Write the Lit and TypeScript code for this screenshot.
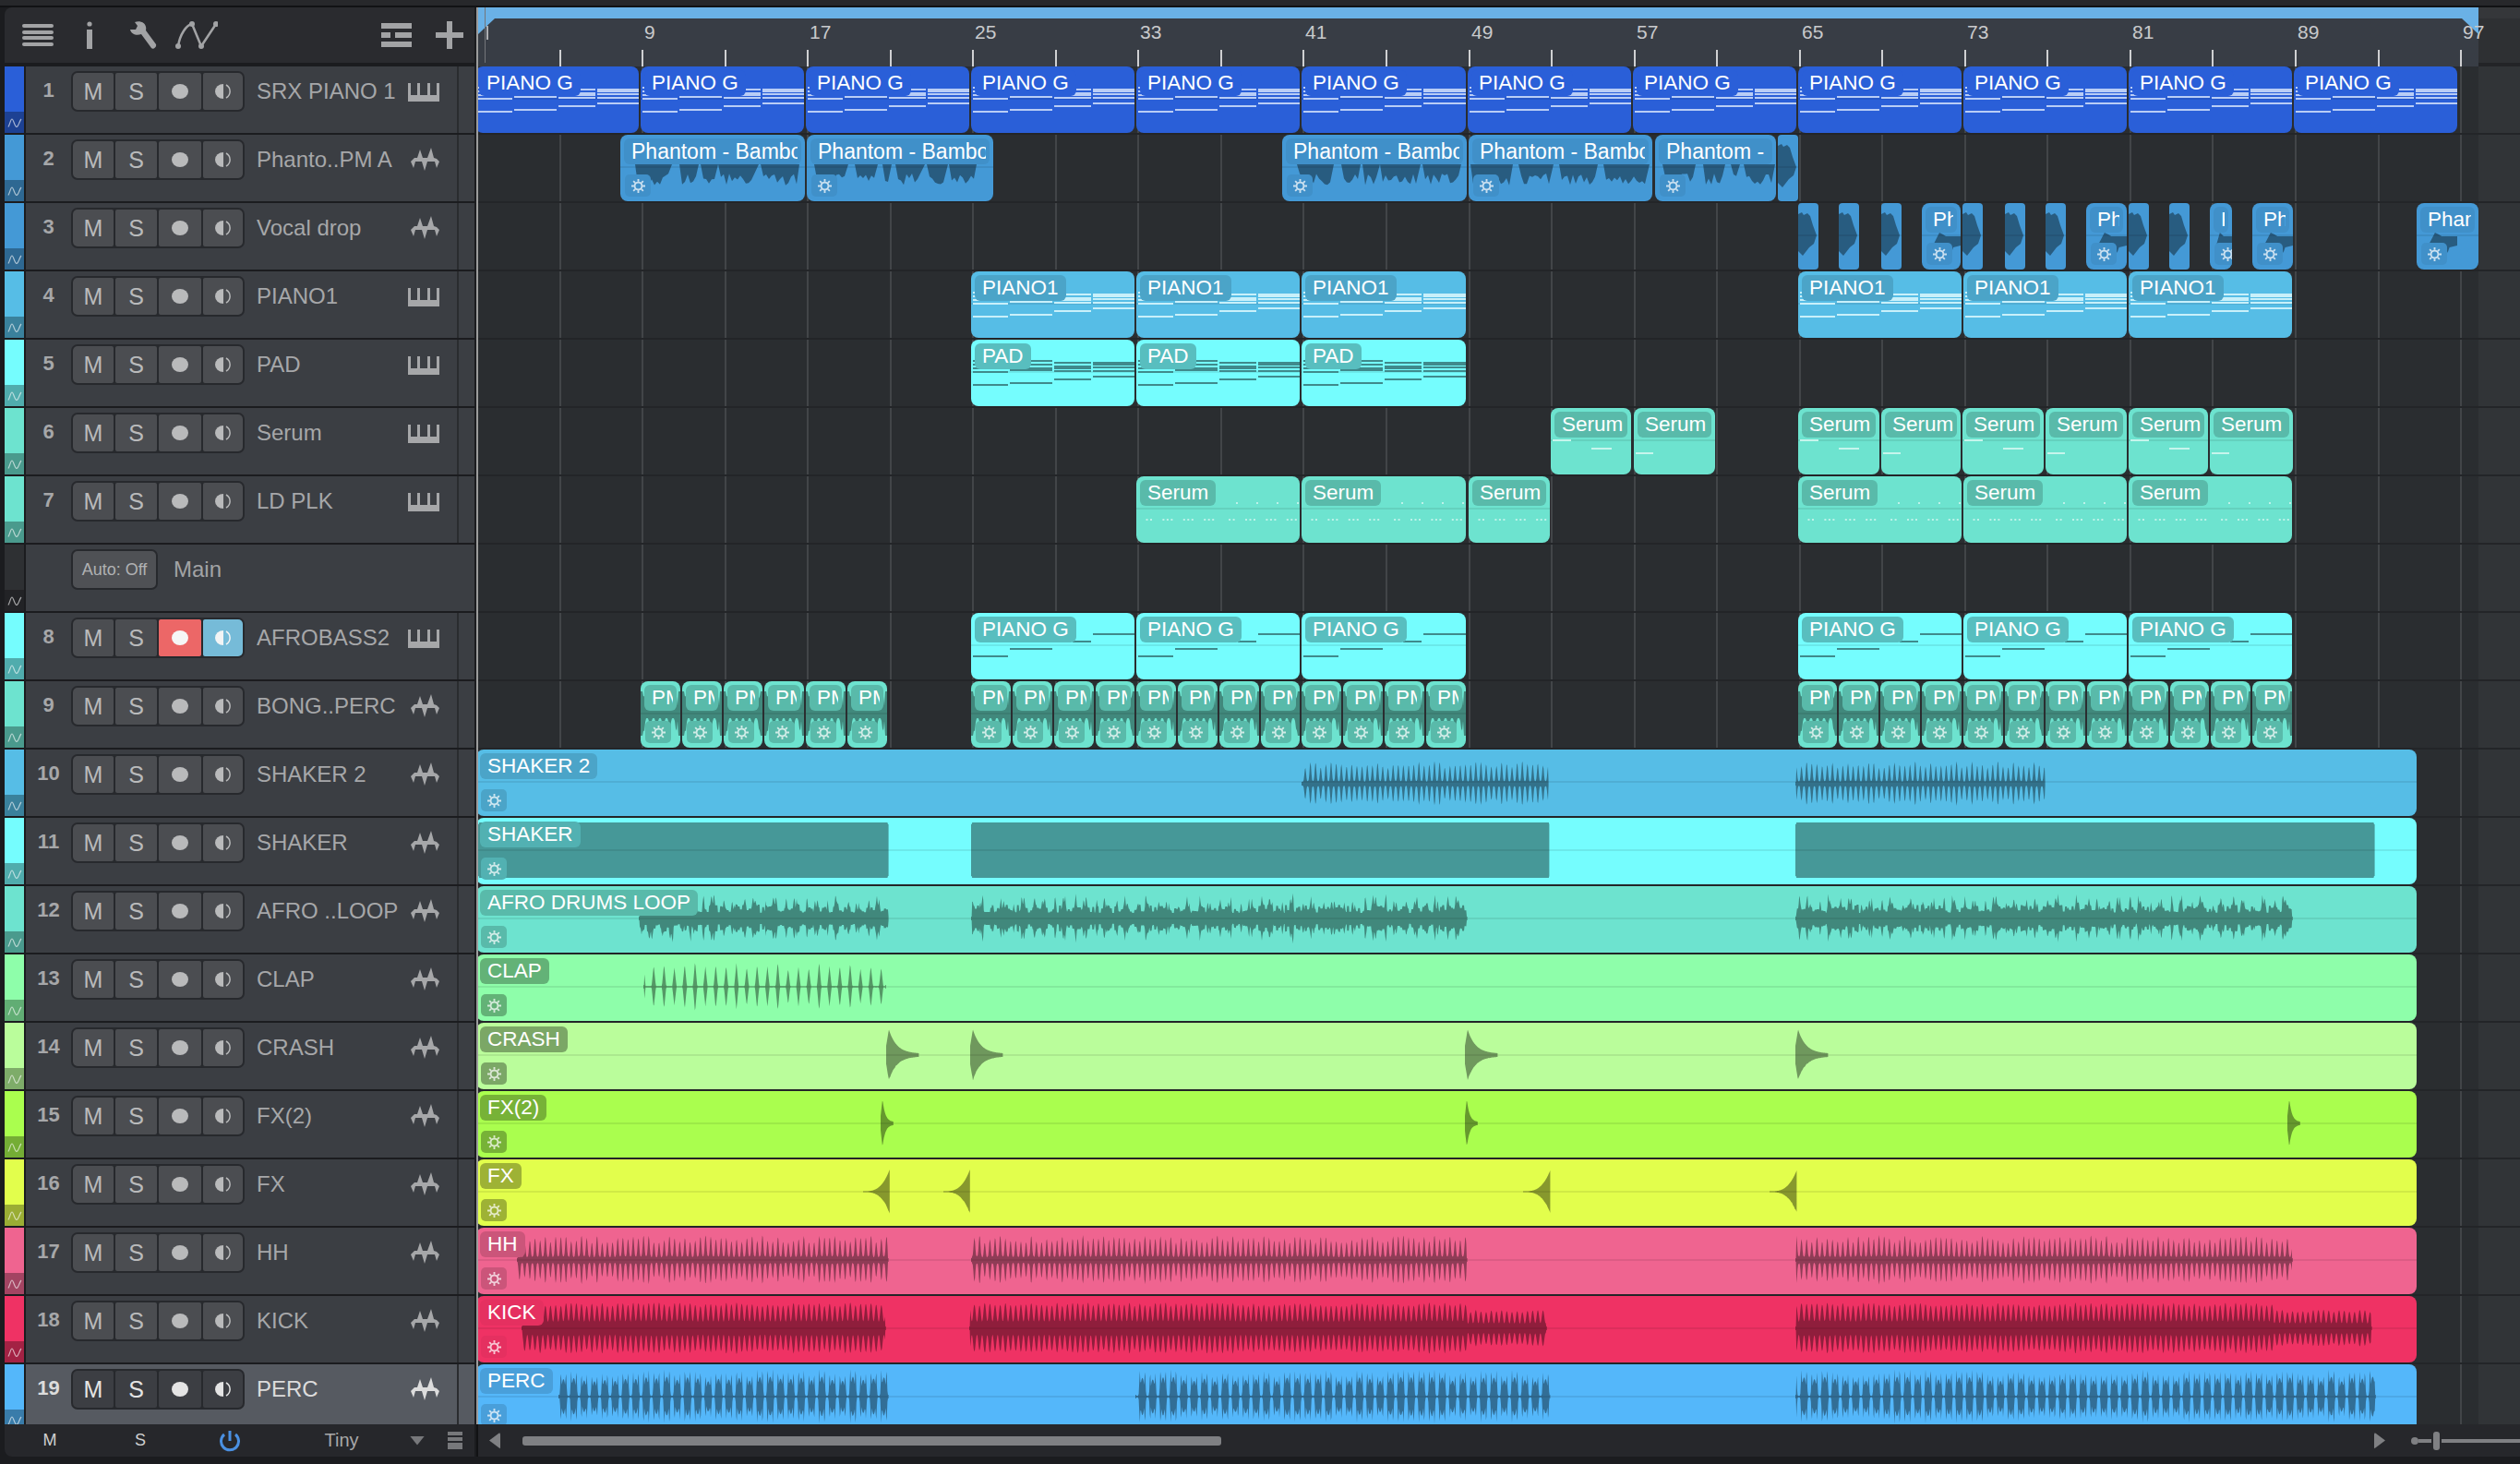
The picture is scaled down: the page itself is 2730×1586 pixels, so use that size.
import { LitElement, html, svg, css } from 'lit';
import { customElement } from 'lit/decorators.js';

type Clip = { x0: number; x1: number; label: string; kind: string; idx?: number };
type Row = {
  n?: number;
  name: string;
  color: string;
  icon?: string;
  chip: number;
  note?: string;
  clips: Clip[];
  wave?: string;
  spans?: number[][];
  auto?: boolean;
};

const bx = (b: number) => 516 + (b - 1) * 22.386;

function shade(hex: string, f: number) {
  const v = [1, 3, 5].map((i) => Math.round(parseInt(hex.slice(i, i + 2), 16) * f));
  return `rgb(${v[0]},${v[1]},${v[2]})`;
}

function rng(seed: number) {
  let s = seed;
  return () => {
    s = (s + 0x6d2b79f5) | 0;
    let t = Math.imul(s ^ (s >>> 15), 1 | s);
    t = (t + Math.imul(t ^ (t >>> 7), 61 | t)) ^ t;
    return ((t ^ (t >>> 14)) >>> 0) / 4294967296;
  };
}

function bars(starts: number[], len: number, label: string, kind: string): Clip[] {
  return starts.map((b, idx) => ({
    x0: Math.round(bx(b)) - 1,
    x1: Math.round(bx(b + len)) - 3,
    label,
    kind,
    idx,
  }));
}

function px(list: number[][], label: string, kind: string): Clip[] {
  return list.map((s, idx) => ({ x0: s[0], x1: s[1], label, kind, idx }));
}

function full(label: string): Clip[] {
  return [{ x0: 516, x1: 2618, label, kind: 'full' }];
}

const every8 = (from: number, count: number) => Array.from({ length: count }, (_, i) => from + i * 8);
const every2 = (from: number, count: number) => Array.from({ length: count }, (_, i) => from + i * 2);

const ROWS: Row[] = [
  { n: 1, name: 'SRX PIANO 1', color: '#2a5fd8', icon: 'keys', chip: 1, note: '#b9cdf6', clips: bars(every8(1, 12), 8, 'PIANO G', 'chords') },
  {
    n: 2, name: 'Phanto..PM A', color: '#4499d6', icon: 'wave', chip: 0.94,
    clips: [
      ...px([[672, 872], [874, 1076], [1389, 1589], [1591, 1790]], 'Phantom - Bamboo', 'phantom'),
      { x0: 1793, x1: 1924, label: 'Phantom - Bamboo', kind: 'phantom', idx: 4 },
      { x0: 1926, x1: 1948, label: '', kind: 'stub' },
    ],
  },
  {
    n: 3, name: 'Vocal drop', color: '#4499d6', icon: 'wave', chip: 0.94,
    clips: [
      ...px([[1948, 1970], [1992, 2014], [2038, 2060], [2126, 2148], [2172, 2194], [2216, 2238], [2306, 2328], [2350, 2372]], '', 'stub'),
      ...px([[2082, 2124], [2260, 2304], [2394, 2418], [2440, 2484], [2618, 2685]], 'Phantom', 'ph'),
    ],
  },
  { n: 4, name: 'PIANO1', color: '#56bde6', icon: 'keys', chip: 0.87, note: '#c8f0fa', clips: bars([25, 33, 41, 65, 73, 81], 8, 'PIANO1', 'chords') },
  { n: 5, name: 'PAD', color: '#75fdfe', icon: 'keys', chip: 0.75, note: '#3f8a8c', clips: bars([25, 33, 41], 8, 'PAD', 'chords') },
  {
    n: 6, name: 'Serum', color: '#6de3cf', icon: 'keys', chip: 0.82, note: '#c6f5ec',
    clips: px([[1680, 1767], [1770, 1858], [1948, 2036], [2038, 2124], [2126, 2214], [2216, 2304], [2306, 2392], [2394, 2484]], 'Serum', 'serum'),
  },
  {
    n: 7, name: 'LD PLK', color: '#6de3cf', icon: 'keys', chip: 0.82, note: 'rgba(255,255,255,0.55)',
    clips: [
      ...bars([33, 41], 8, 'Serum', 'dots'),
      { x0: 1591, x1: 1679, label: 'Serum', kind: 'dots' },
      ...bars([65, 73, 81], 8, 'Serum', 'dots'),
    ],
  },
  { name: 'Main', color: '#2e3033', chip: 1, clips: [], auto: true },
  { n: 8, name: 'AFROBASS2', color: '#75fdfe', icon: 'keys', chip: 0.75, note: '#3f8a8c', clips: bars([25, 33, 41, 65, 73, 81], 8, 'PIANO G', 'sparse') },
  {
    n: 9, name: 'BONG..PERC', color: '#6de3cf', icon: 'wave', chip: 0.82,
    clips: [...every2(9, 6), ...every2(25, 12), ...every2(65, 12)].flatMap((b) => bars([b], 2, 'PM', 'pn')),
  },
  { n: 10, name: 'SHAKER 2', color: '#56bde6', icon: 'wave', chip: 0.87, clips: full('SHAKER 2'), wave: 'shaker', spans: [[1410, 1678], [1945, 2216]] },
  { n: 11, name: 'SHAKER', color: '#75fdfe', icon: 'wave', chip: 0.7, clips: full('SHAKER'), wave: 'block', spans: [[518, 963], [1052, 1679], [1945, 2573]] },
  { n: 12, name: 'AFRO ..LOOP', color: '#6de3cf', icon: 'wave', chip: 0.82, clips: full('AFRO DRUMS LOOP'), wave: 'afro', spans: [[692, 963], [1052, 1590], [1945, 2484]] },
  { n: 13, name: 'CLAP', color: '#8efeaa', icon: 'wave', chip: 0.7, clips: full('CLAP'), wave: 'clap', spans: [[697, 960]] },
  { n: 14, name: 'CRASH', color: '#bafd9b', icon: 'wave', chip: 0.66, clips: full('CRASH'), wave: 'crash', spans: [[960, 996], [1051, 1087], [1587, 1623], [1945, 1981]] },
  { n: 15, name: 'FX(2)', color: '#aafe4e', icon: 'wave', chip: 0.7, clips: full('FX(2)'), wave: 'hit', spans: [[954, 968], [1587, 1601], [2478, 2492]] },
  { n: 16, name: 'FX', color: '#e2fe4c', icon: 'wave', chip: 0.7, clips: full('FX'), wave: 'swell', spans: [[935, 964], [1022, 1051], [1650, 1680], [1917, 1947]] },
  { n: 17, name: 'HH', color: '#ef6490', icon: 'wave', chip: 0.85, clips: full('HH'), wave: 'hh', spans: [[560, 963], [1052, 1590], [1945, 2484]] },
  { n: 18, name: 'KICK', color: '#ef3264', icon: 'wave', chip: 0.96, clips: full('KICK'), wave: 'kick', spans: [[565, 960], [1050, 1676], [1945, 2570]] },
  { n: 19, name: 'PERC', color: '#54b7fa', icon: 'wave', chip: 0.87, clips: full('PERC'), wave: 'perc', spans: [[605, 963], [1230, 1680], [1945, 2574]] },
];

const PHANTOM_TEETH = [
  [[16, 56], [64, 85], [87, 106], [106, 150], [152, 194]],
  [[8, 45], [52, 77], [82, 92], [96, 128], [130, 153], [154, 184]],
  [[16, 56], [64, 85], [87, 106], [106, 150], [152, 194]],
  [[2, 48], [54, 92], [98, 140], [146, 196]],
  [[8, 44], [52, 76], [82, 92], [96, 130]],
];

// height of the wave at absolute x, for the looping kinds
function heightAt(kind: string, x: number, r: (i: number) => number): number {
  if (kind === 'block') return 30;
  if (kind === 'kick') {
    const s = Math.abs(Math.sin((Math.PI * x) / 5.6));
    const env = (x > 2463 && x < 2600) || (x > 1590 && x < 1680) ? 0.72 : 1;
    return 28 * env * (0.28 + 0.72 * s * s) * (0.86 + 0.14 * r(Math.floor(x / 5.6)));
  }
  if (kind === 'hh') {
    const s = Math.abs(Math.sin((Math.PI * x) / 5.6));
    return 27 * (0.16 + 0.84 * Math.pow(s, 4)) * (0.7 + 0.3 * r(Math.floor(x / 5.6)));
  }
  if (kind === 'shaker') {
    const s = Math.abs(Math.sin((Math.PI * x) / 5.6));
    const slow = Math.abs(Math.sin((Math.PI * x) / 22.4));
    return (3 + 22 * Math.pow(s, 4) * (0.75 + 0.25 * r(Math.floor(x / 5.6)))) * (0.78 + 0.22 * slow);
  }
  if (kind === 'perc') {
    const s = Math.abs(Math.sin((Math.PI * x) / 11.2));
    const t = Math.abs(Math.sin((Math.PI * x) / 5.6));
    const peak = 22 + 7 * r(Math.floor(x / 11.2));
    return Math.max(peak * 0.72 * Math.pow(s, 3), peak * Math.pow(t, 10)) + 0.8;
  }
  if (kind === 'afro') {
    const d = Math.abs(((x + 5) % 11.2) - 5.6);
    const spike = Math.max(0, 1 - d / 1.4);
    const d2 = Math.abs(((x + 2) % 22.4) - 11.2);
    const tall = Math.max(0, 1 - d2 / 1.6);
    return 6 + 9 * r(Math.floor(x / 2.4)) + spike * (6 + 8 * r(Math.floor(x / 11.2) + 500)) + tall * 12;
  }
  if (kind === 'clap') {
    const d = Math.abs(((x + 3) % 11.2) - 5.6);
    return Math.max(0.03, 1 - d / 2.4) * 28 * (0.68 + 0.32 * r(Math.floor(x / 11.2)));
  }
  return 2;
}

function wavePath(kind: string, x0: number, x1: number, origin: number, seed: number): string {
  const rand = rng(seed);
  const table = Array.from({ length: 1024 }, () => rand());
  const r = (i: number) => table[Math.abs(i) % 1024];
  const mid = kind === 'shaker' ? 37 : 35;
  const top: string[] = [];
  const bottom: string[] = [];
  const w = x1 - x0;
  for (let a = 0; a <= w; a += 0.6) {
    const x = x0 + a;
    let h = 0;
    if (kind === 'crash') h = a < 3 ? 10 + (a / 3) * 18 : 1.5 + 26 * Math.exp(-(a - 3) / 8.5);
    else if (kind === 'hit') h = a < 2 ? 8 + 9 * a : 1.5 + 25 * Math.exp(-(a - 2) / 3);
    else if (kind === 'swell') h = 0.5 + 24 * Math.pow(a / w, 3.2);
    else h = heightAt(kind, x, r);
    if (kind === 'block' && (a < 1 || w - a < 1)) h = 28;
    if (kind !== 'block' && kind !== 'crash' && kind !== 'hit' && kind !== 'swell' && (a < 1 || w - a < 1)) h = 2;
    const asym = kind === 'block' ? 1 : 0.94 + 0.06 * r(Math.floor(a) + 77);
    top.push(`${(x - origin).toFixed(1)} ${(mid - h).toFixed(1)}`);
    bottom.unshift(`${(x - origin).toFixed(1)} ${(mid + h * asym).toFixed(1)}`);
  }
  return `M${top.join('L')}L${bottom.join('L')}Z`;
}

function pnPath(w: number, seed: number): string {
  const rand = rng(seed);
  const top: string[] = [];
  const bottom: string[] = [];
  for (let a = 0; a <= w; a += 1) {
    const s = Math.abs(Math.sin((Math.PI * a) / 7));
    let h = 5 + 16 * Math.pow(s, 5) * (0.6 + 0.4 * rand());
    if (a < 3 || w - a < 3) h = 24;
    top.push(`${a} ${(35 - h).toFixed(1)}`);
    bottom.unshift(`${a} ${(35 + h).toFixed(1)}`);
  }
  return `M${top.join('L')}L${bottom.join('L')}Z`;
}

function teethPath(segs: number[][], seed: number): string {
  const rand = rng(seed);
  return segs
    .map(([a, b]) => {
      const pts = [`M${a} 32`];
      for (let x = a + 3; x < b - 2; x += 3) pts.push(`L${x} ${(42 + rand() * 13).toFixed(1)}`);
      pts.push(`L${b} 32Z`);
      return pts.join('');
    })
    .join('');
}

const CHORDS = [
  [2, 38, 22, 2], [2, 38, 26, 2], [2, 38, 30, 2], [2, 38, 34, 2], [2, 38, 48, 2],
  [42, 46, 22, 2], [42, 46, 26, 2], [42, 46, 30, 4], [42, 46, 46, 2],
  [90, 40, 24, 2], [90, 40, 28, 4], [90, 40, 33, 2], [90, 40, 42, 2],
  [132, 46, 24, 4], [132, 46, 29, 2], [132, 46, 33, 2], [132, 46, 39, 2],
];
const SPARSE = [[2, 38, 46, 2], [42, 46, 38, 2], [110, 20, 30, 2], [132, 46, 22, 2]];

const gearIcon = html`<svg class="gear-ico" viewBox="0 0 16 16" width="15" height="15">
  <circle cx="8" cy="8" r="4.2" fill="none" stroke="currentColor" stroke-width="2"></circle>
  <path d="M8 0v3M8 13v3M0 8h3M13 8h3M2.3 2.3l2.1 2.1M11.6 11.6l2.1 2.1M2.3 13.7l2.1-2.1M11.6 4.4l2.1-2.1" stroke="currentColor" stroke-width="2"></path>
</svg>`;

const autoIcon = html`<svg class="auto-ico" viewBox="0 0 16 10" width="16" height="10">
  <path d="M1 9.5C3 6 3.5 1 5 1c1.500 0 3 8.500 5 8.500S13 3 15 1" fill="none" stroke="currentColor" stroke-width="1.200"></path>
</svg>`;

const keysIcon = html`<svg class="t-ico" viewBox="0 0 34 20" width="34" height="20">
  <path d="M0 0h3v13h7V0h3v13h8V0h3v13h7V0h3v20H0z" fill="currentColor"></path>
</svg>`;

const waveIcon = html`<svg class="t-ico wave-ico" viewBox="0 0 31 25" width="31" height="25">
  <path d="M0 15L4 11L7 11L10 2L13 11L18 11L22 0L25 11L28 12L31 15L28 22L26 15L18 15L15 25L12 15L5 15L3 22Z" fill="currentColor"></path>
</svg>`;

const monIcon = html`<svg viewBox="0 0 18 16" width="18" height="16">
  <path d="M9 0A9 8 0 0 0 9 16Z" fill="currentColor"></path>
  <path d="M12 1A8 8 0 0 1 12 15" fill="none" stroke="currentColor" stroke-width="1.500"></path>
</svg>`;

@customElement('app-root')
export class AppRoot extends LitElement {
  static styles = css`
    :host {
      display: block;
      width: 2730px;
      height: 1586px;
      overflow: hidden;
      background: #1b1c1f;
      font-family: 'Liberation Sans', Arial, sans-serif;
    }
    .topline {
      height: 6px;
      background: #27282b;
      border-bottom: 2px solid #111214;
    }
    .main {
      display: flex;
      height: 1570px;
    }
    .left {
      width: 509px;
      margin-left: 5px;
      display: flex;
      flex-direction: column;
    }
    .toolbar {
      height: 60px;
      margin-bottom: 4px;
      background: #2a2b2f;
      border-top-left-radius: 8px;
      display: flex;
      align-items: center;
      padding: 0 12px 0 19px;
      color: #a2a3a5;
    }
    .toolbar svg {
      display: block;
      flex: none;
    }
    .tb-i { margin-left: 36px; }
    .tb-w { margin-left: 38px; }
    .tb-a { margin-left: 20px; }
    .tb-l { margin-left: auto; }
    .tb-p { margin-left: 26px; }

    .rows {
      height: 1471px;
      overflow: hidden;
    }
    .row {
      display: flex;
      height: 72px;
      margin-bottom: 2px;
    }
    .strip {
      width: 21px;
      flex: none;
      display: flex;
      flex-direction: column;
    }
    .strip-top {
      height: 49px;
    }
    .strip-bot {
      height: 23px;
      display: flex;
      align-items: center;
      justify-content: center;
      color: rgba(255, 255, 255, 0.6);
    }
    .body {
      flex: 1;
      margin-left: 2px;
      background: #3b3e43;
      display: flex;
      align-items: flex-start;
      padding-top: 5px;
      color: #a6a7a9;
    }
    .row.sel .body {
      background: #565a61;
      color: #dcdcdc;
    }
    .num {
      width: 49px;
      flex: none;
      text-align: center;
      font-size: 22px;
      font-weight: bold;
      line-height: 42px;
    }
    .btns {
      width: 188px;
      height: 44px;
      flex: none;
      box-sizing: border-box;
      display: flex;
      gap: 2px;
      padding: 2px;
      background: #27292d;
      border-radius: 7px;
    }
    .btn {
      flex: 1;
      display: flex;
      align-items: center;
      justify-content: center;
      background: #4b4d51;
      color: #b9babb;
      font-size: 25px;
      border-radius: 2px;
    }
    .row.sel .btn {
      background: #3c3e43;
      color: #e4e4e4;
    }
    .btn.m { flex: none; width: 44px; border-radius: 5px 2px 2px 5px; }
    .btn.s { flex: none; width: 45px; }
    .btn.r { flex: none; width: 46px; }
    .btn.v { flex: none; width: 43px; border-radius: 2px 5px 5px 2px; }
    .btn.rec-on {
      background: #ec6767;
      color: #f6f6f6;
    }
    .btn.mon-on {
      background: #76bbd8;
      color: #f2f4f5;
    }
    .dot {
      width: 18px;
      height: 16px;
      border-radius: 50%;
      background: currentColor;
    }
    .name {
      width: 164px;
      flex: none;
      margin-left: 13px;
      font-size: 24px;
      line-height: 44px;
      white-space: nowrap;
      overflow: hidden;
    }
    .t-ico {
      flex: none;
      margin-top: 13px;
      width: 34px;
      display: block;
    }
    .wave-ico {
      margin-top: 9px;
      margin-left: 3px;
      width: 31px;
    }
    .vline {
      flex: none;
      width: 2px;
      margin-left: 19px;
      margin-top: -5px;
      height: 72px;
      background: #2a2c2f;
    }
    .auto-btn {
      margin-left: 49px;
      width: 94px;
      height: 44px;
      box-sizing: border-box;
      border: 2px solid #27292d;
      border-radius: 7px;
      background: #4f5155;
      color: #b0b1b3;
      font-size: 18px;
      display: flex;
      align-items: center;
      justify-content: center;
    }
    .main-name {
      margin-left: 17px;
      font-size: 24px;
      line-height: 44px;
      color: #a2a3a5;
    }

    .bar-l {
      height: 35px;
      background: #26272b;
      border-bottom-left-radius: 8px;
      display: flex;
      align-items: center;
      color: #cfcfd0;
      font-size: 18px;
    }
    .cell {
      display: flex;
      align-items: center;
      justify-content: center;
      flex: none;
    }
    .c-m { width: 98px; }
    .c-p { width: 96px; }
    .c-t { width: 146px; font-size: 20px; color: #a8a8a9; }
    .tri-d {
      width: 16px;
      height: 10px;
      margin-left: 1px;
      background: #77787b;
      clip-path: polygon(0 0, 100% 0, 50% 100%);
    }
    .lines {
      margin-left: 25px;
      width: 16px;
      display: flex;
      flex-direction: column;
      gap: 2px;
    }
    .lines i {
      display: block;
      height: 4px;
      background: #77787b;
    }
    .lines i:last-child {
      height: 7px;
    }

    .right {
      margin-left: 2px;
      width: 2214px;
      display: flex;
      flex-direction: column;
    }
    .ruler {
      height: 64px;
      border-left: 2px solid #9c9c9c;
      background: linear-gradient(#35373a 0 12px, #2e3033 12px 60px, #232427 60px);
      position: relative;
    }
    .loop {
      width: 2167px;
      height: 12px;
      background: #6ab1e6;
    }
    .scale {
      width: 2167px;
      height: 52px;
      background: #383d45;
      position: relative;
    }
    .tick {
      position: absolute;
      top: 34px;
      width: 2px;
      height: 18px;
      background: #cfd0d2;
    }
    .bar-no {
      position: absolute;
      top: 3px;
      font-size: 21px;
      line-height: 24px;
      color: #c9cacc;
    }
    .tri-a,
    .tri-b {
      position: absolute;
      top: 0;
      width: 18px;
      height: 17px;
      background: #6ab1e6;
    }
    .tri-a {
      left: 0;
      clip-path: polygon(0 0, 100% 0, 0 100%);
    }
    .tri-b {
      left: 2149px;
      clip-path: polygon(0 0, 100% 0, 100% 100%);
    }
    .start-mark {
      position: absolute;
      left: 7px;
      top: -12px;
      width: 1px;
      height: 60px;
      background: #74767a;
    }
    .start-mark-b {
      position: absolute;
      left: 9px;
      top: 8px;
      width: 2px;
      height: 15px;
      background: #aeb0b3;
    }
    .lanes {
      height: 1471px;
      position: relative;
      overflow: hidden;
      border-left: 2px solid #9c9c9c;
      background: #2a2d30;
    }
    .past {
      position: absolute;
      left: 2167px;
      right: 0;
      top: 0;
      bottom: 0;
      background: rgba(255, 255, 255, 0.035);
    }
    .grid-line {
      position: absolute;
      top: 0;
      bottom: 0;
      width: 2px;
      background: #424548;
    }
    .lane {
      height: 72px;
      border-bottom: 2px solid #232528;
      position: relative;
    }
    .clip {
      position: absolute;
      top: 0;
      height: 72px;
      border-radius: 8px;
      overflow: hidden;
    }
    .clip.stub {
      border-radius: 4px;
    }
    .mid {
      position: absolute;
      left: 0;
      right: 0;
      top: 34px;
      height: 2px;
      background: rgba(0, 0, 0, 0.08);
    }
    .paint {
      position: absolute;
      left: 0;
      top: 0;
      display: block;
    }
    .chip {
      position: absolute;
      left: 4px;
      top: 4px;
      height: 28px;
      max-width: calc(100% - 8px);
      box-sizing: border-box;
      padding: 0 4px 0 8px;
      border-radius: 6px;
      display: flex;
      align-items: center;
      color: #fff;
      font-size: 22.5px;
    }
    .chip.phantom {
      font-size: 23px;
    }
    .chip span {
      display: block;
      min-width: 0;
      padding-right: 4px;
      overflow: hidden;
      white-space: nowrap;
      line-height: 28px;
    }
    .gear {
      position: absolute;
      left: 5px;
      top: 43px;
      width: 28px;
      height: 24px;
      border-radius: 5px;
      display: flex;
      align-items: center;
      justify-content: center;
      color: rgba(255, 255, 255, 0.72);
    }
    .gear-ico {
      display: block;
      flex: none;
    }
    .bar-r {
      height: 35px;
      background: #26272b;
      border-left: 2px solid #111214;
      display: flex;
      align-items: center;
      padding-left: 12px;
    }
    .arrow {
      width: 12px;
      height: 18px;
      flex: none;
      background: #7f8083;
      border-radius: 2px;
    }
    .arrow.l {
      clip-path: polygon(100% 0, 100% 100%, 0 50%);
    }
    .arrow.r {
      margin-left: auto;
      clip-path: polygon(0 0, 0 100%, 100% 50%);
    }
    .thumb {
      width: 757px;
      height: 10px;
      margin-left: 24px;
      flex: none;
      border-radius: 3px;
      background: #7f8083;
    }
    .zoom {
      flex: none;
      width: 118px;
      margin-left: 28px;
      display: flex;
      align-items: center;
    }
    .zoom-dot {
      width: 8px;
      height: 8px;
      border-radius: 50%;
      background: #7f8083;
    }
    .zoom-a {
      width: 14px;
      height: 4px;
      background: #7f8083;
    }
    .zoom-t {
      width: 7px;
      height: 20px;
      margin: 0 2px;
      border-radius: 3px;
      background: #7f8083;
    }
    .zoom-b {
      flex: 1;
      height: 4px;
      background: #7f8083;
    }
  `;

  private toolbar() {
    return html`<div class="toolbar">
      <svg width="34" height="24" viewBox="0 0 34 24" fill="currentColor">
        <rect y="0" width="34" height="4" rx="2"></rect>
        <rect y="7" width="34" height="4" rx="2"></rect>
        <rect y="13" width="34" height="4" rx="2"></rect>
        <rect y="20" width="34" height="4" rx="2"></rect>
      </svg>
      <svg class="tb-i" width="6" height="30" viewBox="0 0 6 30" fill="currentColor">
        <circle cx="3" cy="3" r="2.600"></circle>
        <rect y="9" width="6" height="21"></rect>
      </svg>
      <svg class="tb-w" width="32" height="30" viewBox="0 0 32 30" fill="currentColor">
        <path d="M3 9L9 9L11 5L8 1C13 -1 19 1 20 6C20.500 8 20 9 20 10L31 25C32 28 28 31 26 29L15 14C10 16 4 14 3 9Z"></path>
      </svg>
      <svg class="tb-a" width="46" height="30" viewBox="0 0 46 30" fill="none" stroke="currentColor" stroke-width="2.500">
        <path d="M3 27C5 14 12 4 18 3L28 27L44 3"></path>
        <g fill="currentColor" stroke="none">
          <circle cx="3" cy="27" r="3"></circle>
          <circle cx="18" cy="3" r="3"></circle>
          <circle cx="28" cy="27" r="3"></circle>
          <circle cx="44" cy="3" r="3"></circle>
        </g>
      </svg>
      <svg class="tb-l" width="33" height="26" viewBox="0 0 33 26" fill="currentColor">
        <rect width="33" height="6"></rect>
        <rect y="10" width="10" height="6"></rect>
        <rect x="15" y="10" width="18" height="6"></rect>
        <rect y="20" width="33" height="6"></rect>
      </svg>
      <svg class="tb-p" width="30" height="30" viewBox="0 0 30 30" fill="currentColor">
        <rect x="12" width="6" height="30"></rect>
        <rect y="12" width="30" height="6"></rect>
      </svg>
    </div>`;
  }

  private trackRow(r: Row) {
    const stripTop = html`<div class="strip-top" style="background:${r.color}"></div>`;
    if (r.auto) {
      return html`<div class="row">
        <div class="strip">
          ${stripTop}
          <div class="strip-bot" style="background:#222326">${autoIcon}</div>
        </div>
        <div class="body">
          <div class="auto-btn">Auto: Off</div>
          <div class="main-name">${r.name}</div>
        </div>
      </div>`;
    }
    const armed = r.n === 8;
    return html`<div class="row ${r.n === 19 ? 'sel' : ''}">
      <div class="strip">
        ${stripTop}
        <div class="strip-bot" style="background:${shade(r.color, 0.68)}">${autoIcon}</div>
      </div>
      <div class="body">
        <div class="num">${r.n}</div>
        <div class="btns">
          <div class="btn m">M</div>
          <div class="btn s">S</div>
          <div class="btn r ${armed ? 'rec-on' : ''}"><div class="dot"></div></div>
          <div class="btn v ${armed ? 'mon-on' : ''}">${monIcon}</div>
        </div>
        <div class="name">${r.name}</div>
        ${r.icon === 'keys' ? keysIcon : waveIcon}
        <div class="vline"></div>
      </div>
    </div>`;
  }

  private paint(r: Row, c: Clip, w: number) {
    const dark = 'rgba(0,0,0,0.4)';
    const note = r.note ?? '#fff';
    const seed = (r.n ?? 0) * 97 + (c.idx ?? 0) * 13 + 5;
    let body: unknown = null;
    if (c.kind === 'chords' || c.kind === 'sparse') {
      const list = c.kind === 'chords' ? CHORDS : SPARSE;
      body = list.map((n) => svg`<rect x=${n[0]} y=${n[2]} width=${n[1]} height=${n[3]} fill=${note}></rect>`);
    } else if (c.kind === 'serum') {
      const first = (c.idx ?? 0) % 2 === 0;
      body = first
        ? svg`<rect x="2" y="34" width="20" height="2" fill=${note}></rect><rect x="44" y="43" width="22" height="2" fill=${note}></rect>`
        : svg`<rect x="2" y="48" width="19" height="2" fill=${note}></rect>`;
    } else if (c.kind === 'dots') {
      const dots: unknown[] = [];
      for (let g = 0; g < 8; g++) {
        const x0 = 6 + g * 22.4;
        if (x0 > w - 8) break;
        for (let k = 0; k < 3; k++) {
          if (k === 0 && g % 4 === 0) continue;
          dots.push(svg`<rect x=${x0 + k * 4.5} y="46" width="2" height="2" fill=${note}></rect>`);
        }
      }
      for (let x = 108; x < w - 2; x += 22) {
        dots.push(svg`<rect x=${x} y="28" width="2" height="2" fill=${note}></rect>`);
      }
      body = dots;
    } else if (c.kind === 'phantom') {
      body = svg`<path d=${teethPath(PHANTOM_TEETH[c.idx ?? 0], seed)} fill=${dark}></path>`;
    } else if (c.kind === 'stub') {
      const k = w / 22;
      const pts = [[0, 12], [4, 10], [6, 13], [10, 11], [13, 14], [16, 24], [20, 35], [17, 44], [12, 48], [5, 57], [0, 52]]
        .map((p) => `${p[0] * k},${p[1]}`)
        .join(' ');
      body = svg`<polygon points=${pts} fill=${dark}></polygon>`;
    } else if (c.kind === 'ph') {
      const k = Math.min(w, 44) / 42;
      const pts = [[19, 32], [23, 34], [26, 36], [42, 36], [42, 46], [34, 48], [32, 54], [30, 46], [12, 46], [16, 38]]
        .map((p) => `${p[0] * k},${p[1]}`)
        .join(' ');
      body = svg`<polygon points=${pts} fill=${dark}></polygon>`;
    } else if (c.kind === 'pn') {
      body = svg`<path d=${pnPath(w, seed)} fill=${dark}></path>`;
    } else if (c.kind === 'full' && r.wave) {
      const d = (r.spans ?? []).map((s, i) => wavePath(r.wave as string, s[0], s[1], c.x0, seed + i)).join('');
      body = svg`<path d=${d} fill=${dark}></path>`;
    }
    return html`<svg class="paint" width=${w} height="72" viewBox="0 0 ${w} 72">${body}</svg>`;
  }

  private clip(r: Row, c: Clip) {
    const w = c.x1 - c.x0;
    const tint = shade(r.color, r.chip);
    const hasGear = c.kind === 'phantom' || c.kind === 'ph' || c.kind === 'pn' || c.kind === 'full';
    return html`<div
      class="clip ${c.kind}"
      style="left:${c.x0 - 518}px;width:${w}px;background:${r.color}"
    >
      <div class="mid"></div>
      ${this.paint(r, c, w)}
      ${c.label ? html`<div class="chip ${c.kind}" style="background:${tint}"><span>${c.label}</span></div>` : null}
      ${hasGear ? html`<div class="gear" style="background:${tint}">${gearIcon}</div>` : null}
    </div>`;
  }

  render() {
    const ticks: number[] = [];
    for (let b = 5; b <= 97; b += 4) ticks.push(b);
    const labels: number[] = [];
    for (let b = 9; b <= 97; b += 8) labels.push(b);
    return html`
      <div class="topline"></div>
      <div class="main">
        <div class="left">
          ${this.toolbar()}
          <div class="rows">${ROWS.map((r) => this.trackRow(r))}</div>
          <div class="bar-l">
            <div class="cell c-m">M</div>
            <div class="cell c-m">S</div>
            <div class="cell c-p">
              <svg width="22" height="24" viewBox="0 0 22 24" fill="none" stroke="#4a90e2" stroke-width="3">
                <path d="M11 1v11"></path>
                <path d="M5 5a9.500 9.500 0 1 0 12 0"></path>
              </svg>
            </div>
            <div class="cell c-t">Tiny</div>
            <div class="tri-d"></div>
            <div class="lines"><i></i><i></i><i></i></div>
          </div>
        </div>
        <div class="right">
          <div class="ruler">
            <div class="loop"></div>
            <div class="scale">
              <div class="tri-a"></div>
              <div class="tri-b"></div>
              <div class="start-mark"></div>
              <div class="start-mark-b"></div>
              ${ticks.map((b) => html`<div class="tick" style="left:${Math.round(bx(b)) - 518}px"></div>`)}
              ${labels.map((b) => html`<div class="bar-no" style="left:${Math.round(bx(b)) - 515}px">${b}</div>`)}
            </div>
          </div>
          <div class="lanes">
            <div class="past"></div>
            ${ticks.map((b) => html`<div class="grid-line" style="left:${Math.round(bx(b)) - 518}px"></div>`)}
            ${ROWS.map((r) => html`<div class="lane">${r.clips.map((c) => this.clip(r, c))}</div>`)}
          </div>
          <div class="bar-r">
            <div class="arrow l"></div>
            <div class="thumb"></div>
            <div class="arrow r"></div>
            <div class="zoom">
              <div class="zoom-dot"></div>
              <div class="zoom-a"></div>
              <div class="zoom-t"></div>
              <div class="zoom-b"></div>
            </div>
          </div>
        </div>
      </div>
    `;
  }
}
